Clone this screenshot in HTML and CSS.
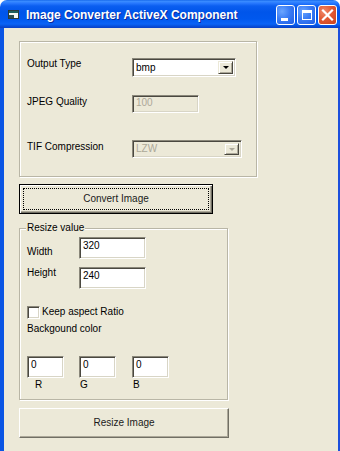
FILE: index.html
```html
<!DOCTYPE html>
<html>
<head>
<meta charset="utf-8">
<link rel="stylesheet" href="styles.css">
</head>
<body>
<div class="window">
  <div class="titlebar">
    <svg class="app-icon" width="11" height="9" viewBox="0 0 11 9">
      <rect x="0.5" y="0.5" width="10" height="8" fill="#f4f6f2" stroke="#2a3a3a"/>
      <rect x="1" y="1" width="9" height="2" fill="#1d5f5a"/>
      <rect x="1" y="5" width="5" height="3" fill="#2f4f4f"/>
    </svg>
    <span class="title">Image Converter ActiveX Component</span>
    <div class="caption-buttons">
      <span class="tb-btn blue">
        <svg width="17" height="18" viewBox="0 0 17 18"><rect x="4" y="12" width="7" height="3" fill="#fff"/></svg>
      </span>
      <span class="tb-btn blue">
        <svg width="17" height="18" viewBox="0 0 17 18"><rect x="4.5" y="4.5" width="9" height="9" fill="none" stroke="#fff"/><rect x="4" y="4" width="10" height="3" fill="#fff"/></svg>
      </span>
      <span class="tb-btn red">
        <svg width="17" height="18" viewBox="0 0 17 18"><path d="M4 4.5 L13 13.5 M13 4.5 L4 13.5" stroke="#fff" stroke-width="2.2" stroke-linecap="square"/></svg>
      </span>
    </div>
  </div>
  <div class="client">
    <div class="group settings">
      <div class="row row-output">
        <span class="lbl">Output Type</span>
        <div class="combo combo-output"><span class="combo-text">bmp</span><span class="drop"><i class="arrow"></i></span></div>
      </div>
      <div class="row row-jpeg">
        <span class="lbl">JPEG Quality</span>
        <div class="textbox disabled jpeg-box">100</div>
      </div>
      <div class="row row-tif">
        <span class="lbl">TIF Compression</span>
        <div class="combo disabled combo-tif"><span class="combo-text">LZW</span><span class="drop"><i class="arrow"></i></span></div>
      </div>
    </div>

    <div class="btn default convert"><span class="focus">Convert Image</span></div>

    <fieldset class="group resize">
      <legend>Resize value</legend>
      <div class="row row-width">
        <span class="lbl lbl-short lbl-width">Width</span>
        <div class="textbox size-box">320</div>
      </div>
      <div class="row row-height">
        <span class="lbl lbl-short">Height</span>
        <div class="textbox size-box">240</div>
      </div>
      <div class="check-row">
        <span class="checkbox"></span>
        <span class="check-label">Keep aspect Ratio</span>
      </div>
      <div class="bg-label">Backgound color</div>
      <div class="rgb">
        <div class="rgb-cell cell-r"><div class="textbox rgb-box">0</div><span class="rgb-letter letter-r">R</span></div>
        <div class="rgb-cell cell-g"><div class="textbox rgb-box">0</div><span class="rgb-letter">G</span></div>
        <div class="rgb-cell cell-b"><div class="textbox rgb-box">0</div><span class="rgb-letter">B</span></div>
      </div>
    </fieldset>

    <div class="btn resize-btn">Resize Image</div>
  </div>
</div>
</body>
</html>
```

FILE: styles.css
```css
html, body {
  margin: 0;
  padding: 0;
  background: #ffffff;
}

.window {
  width: 340px;
  height: 451px;
  overflow: hidden;
  font-family: "Liberation Sans", Arial, sans-serif;
  font-size: 10px;
  line-height: 12px;
  color: #000;
}

/* ---------- title bar ---------- */
.titlebar {
  height: 28px;
  display: flex;
  align-items: center;
  border-radius: 7px 7px 0 0;
  background: linear-gradient(to bottom,
    #0a5de6 0px, #3d8fff 1px, #2a7bff 3px, #0b5ef0 6px,
    #0055ea 12px, #0058ee 19px, #0a63f6 24px, #0650dd 26px, #0a3fc4 28px);
  box-sizing: border-box;
  padding: 0 3px 0 8px;
}

.app-icon {
  flex: none;
  margin-top: 1px;
}

.title {
  margin-left: 7px;
  color: #fff;
  font-weight: bold;
  font-size: 12px;
  line-height: 14px;
  text-shadow: 1px 1px 0 #0a2a9a;
  white-space: nowrap;
  flex: 1;
  margin-top: 1px;
}

.caption-buttons {
  display: flex;
  gap: 2px;
  margin-top: 2px;
}

.tb-btn {
  width: 17px;
  height: 18px;
  border: 1px solid #fff;
  border-radius: 3px;
  display: block;
}

.tb-btn svg {
  display: block;
}

.tb-btn.blue {
  background: radial-gradient(circle at 30% 30%, #6aa5ff 0%, #3a7cf4 45%, #1f5ee6 100%);
}

.tb-btn.red {
  background: radial-gradient(circle at 30% 30%, #f08a6c 0%, #e25a34 45%, #c8411b 100%);
}

/* ---------- client area ---------- */
.client {
  height: 423px;
  box-sizing: border-box;
  background: #ece9d8;
  border-left: 4px solid #0a55e4;
  border-right: 2px solid #1c4fdc;
  padding: 13px 0 0 15px;
}

.group {
  border: 1px solid #b9b6a6;
  box-shadow: inset 1px 1px 0 #ffffff, 1px 1px 0 #ffffff;
}

.settings {
  width: 238px;
  height: 136px;
  box-sizing: border-box;
  padding: 16px 0 0 7px;
}

.row {
  display: flex;
  align-items: flex-start;
}

.lbl {
  width: 105px;
  flex: none;
  white-space: nowrap;
}

.row-output { height: 19px; }
.row-output .lbl { margin-top: 0; }

.row-jpeg { margin-top: 18px; height: 18px; }
.row-jpeg .lbl { margin-top: 1px; }

.row-tif { margin-top: 27px; height: 18px; }
.row-tif .lbl { margin-top: 1px; }

/* sunken controls */
.textbox, .combo {
  box-sizing: border-box;
  background: #fff;
  border: 1px solid;
  border-color: #8a877a #ffffff #ffffff #8a877a;
  box-shadow: inset 1px 1px 0 #4a4840, inset -1px -1px 0 #d8d5c6;
}

.textbox {
  padding: 1px 2px 0 3px;
  white-space: nowrap;
}

.textbox.disabled, .combo.disabled {
  background: #ece9d8;
  color: #aca899;
}

.jpeg-box {
  width: 67px;
  height: 18px;
}

.combo {
  display: flex;
  align-items: center;
  padding: 2px;
}

.combo-output {
  width: 104px;
  height: 19px;
}

.combo-tif {
  width: 110px;
  height: 18px;
}

.combo-text {
  flex: 1;
  padding-left: 1px;
}

.drop {
  width: 15px;
  align-self: stretch;
  box-sizing: border-box;
  background: #ece9d8;
  border: 1px solid;
  border-color: #ece9d8 #4a4840 #4a4840 #ece9d8;
  box-shadow: inset 1px 1px 0 #fff, inset -1px -1px 0 #aca899;
  display: flex;
  align-items: center;
  justify-content: center;
}

.arrow {
  width: 0;
  height: 0;
  border-left: 3px solid transparent;
  border-right: 3px solid transparent;
  border-top: 3px solid #000;
}

.combo.disabled .arrow {
  border-top-color: #aca899;
}

/* ---------- buttons ---------- */
.btn {
  box-sizing: border-box;
  height: 30px;
  background: #ece9d8;
  border: 1px solid;
  border-color: #ffffff #716f64 #716f64 #ffffff;
  box-shadow: inset -1px -1px 0 #aca899;
  display: flex;
  align-items: center;
  justify-content: center;
  color: #1a1a1a;
}

.convert {
  margin-top: 7px;
  width: 194px;
  border: 1px solid #000;
  box-shadow: inset 1px 1px 0 #fff, inset -1px -1px 0 #716f64, inset -2px -2px 0 #aca899;
  padding: 3px;
}

.convert .focus {
  flex: 1;
  align-self: stretch;
  border: 1px dotted #000;
  display: flex;
  align-items: center;
  justify-content: center;
}

.resize-btn {
  margin-top: 8px;
  width: 210px;
}

/* ---------- resize group ---------- */
.resize {
  margin: 8px 0 0 0;
  padding: 0 7px 0 7px;
  width: 209px;
  height: 178px;
  box-sizing: border-box;
  min-width: 0;
}

.resize legend {
  padding: 0 1px;
  margin-left: -1px;
  background: #ece9d8;
  line-height: 12px;
}

.lbl-short {
  width: 52px;
}

.row-width { margin-top: 3px; }
.lbl-width { margin-top: 9px; }

.row-height { margin-top: 8px; }

.size-box {
  width: 67px;
  height: 22px;
  padding-top: 2px;
}

.check-row {
  display: flex;
  align-items: flex-start;
  margin-top: 17px;
}

.checkbox {
  width: 13px;
  height: 13px;
  box-sizing: border-box;
  background: #fff;
  border: 1px solid;
  border-color: #8a877a #ffffff #ffffff #8a877a;
  box-shadow: inset 1px 1px 0 #4a4840, inset -1px -1px 0 #d8d5c6;
}

.check-label {
  margin-left: 2px;
  margin-top: 0;
}

.bg-label {
  margin-top: 4px;
}

.rgb {
  margin-top: 21px;
  display: flex;
}

.rgb-cell {
  display: flex;
  flex-direction: column;
}

.cell-r { width: 52px; }
.cell-g { width: 53px; }
.cell-b { width: 37px; }

.rgb-box {
  width: 37px;
  height: 22px;
  padding-top: 2px;
}

.rgb-letter {
  margin-top: 1px;
  margin-left: 1px;
}

.letter-r {
  margin-left: 8px;
}
```
